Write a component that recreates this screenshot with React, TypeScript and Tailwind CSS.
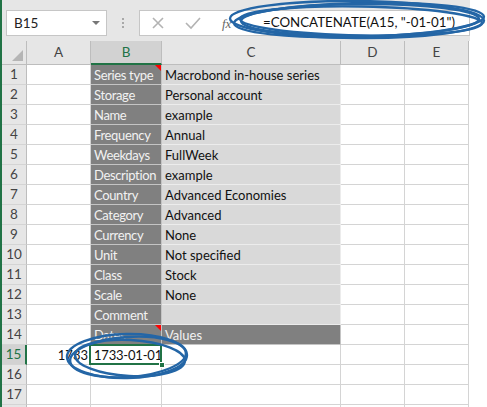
import React from "react";

const rows: { n: number; b?: string; c?: string; cDark?: boolean; note?: boolean }[] = [
  { n: 1, b: "Series type", c: "Macrobond in-house series", note: true },
  { n: 2, b: "Storage", c: "Personal account" },
  { n: 3, b: "Name", c: "example" },
  { n: 4, b: "Frequency", c: "Annual" },
  { n: 5, b: "Weekdays", c: "FullWeek" },
  { n: 6, b: "Description", c: "example" },
  { n: 7, b: "Country", c: "Advanced Economies" },
  { n: 8, b: "Category", c: "Advanced" },
  { n: 9, b: "Currency", c: "None" },
  { n: 10, b: "Unit", c: "Not specified" },
  { n: 11, b: "Class", c: "Stock" },
  { n: 12, b: "Scale", c: "None" },
  { n: 13, b: "Comment", c: "" },
  { n: 14, b: "Dates", c: "Values", cDark: true, note: true },
];

const cols = "grid grid-cols-[25px_64px_71px_179px_64px_64px]";

function Note() {
  return (
    <span className="absolute top-0 right-0 w-0 h-0 border-l-[6px] border-l-transparent border-t-[6px] border-t-[#ff0000]" />
  );
}

function RowHead({ n, active }: { n?: number; active?: boolean }) {
  return (
    <div
      className={`h-[20px] flex items-center justify-center border-b border-[#d4d4d4] text-[13.5px] ${
        active
          ? "bg-[#d2d2d2] text-[#217346] border-r-2 border-r-[#217346]"
          : "bg-[#e6e6e6] text-[#444] border-r border-r-[#bdbdbd]"
      }`}
    >
      {n}
    </div>
  );
}

function Blank() {
  return <div className="h-[20px] border-r border-b border-[#d4d4d4] bg-white" />;
}

export default function App() {
  return (
    <div className="relative w-[487px] h-[407px] bg-white overflow-hidden font-['Lato',sans-serif] text-[13px]">
      <div className="w-[470px] border-l-2 border-[#217346]">
        {/* formula bar */}
        <div className="h-[41px] bg-[#e6e6e6] flex items-start pt-[10px] pl-[4px]">
          <div className="w-[101px] h-[26px] bg-white border border-[#c6c6c6] flex items-center pl-[7px] pr-[6px] text-[#222] text-[13.5px]">
            <span className="flex-1">B15</span>
            <span className="w-0 h-0 border-l-[4px] border-r-[4px] border-t-[4px] border-l-transparent border-r-transparent border-t-[#777]" />
          </div>
          <div className="w-[32px] h-[26px] flex flex-col items-center justify-center gap-[2px]">
            <span className="w-[2px] h-[2px] bg-[#a8a8a8]" />
            <span className="w-[2px] h-[2px] bg-[#a8a8a8]" />
            <span className="w-[2px] h-[2px] bg-[#a8a8a8]" />
          </div>
          <div className="flex-1 h-[26px] bg-white border border-[#c6c6c6] flex items-center whitespace-nowrap overflow-hidden">
            <svg width="100" height="24" viewBox="0 0 100 24" className="shrink-0">
              <path d="M13 7 L23 17 M23 7 L13 17" stroke="#b3b3b3" strokeWidth="1.6" />
              <path d="M46 12 L51 17 L60 7" stroke="#b3b3b3" strokeWidth="1.6" fill="none" />
              <text x="82" y="17" fontStyle="italic" fontSize="13" fill="#666" fontFamily="Liberation Serif, serif">fx</text>
            </svg>
            <span className="ml-[23px] text-[#111] text-[13.3px]">=CONCATENATE(A15, "-01-01")</span>
          </div>
        </div>

        {/* column headers */}
        <div className={`${cols} h-[24px] text-[#444] text-[13.5px]`}>
          <div className="relative bg-[#e6e6e6] border-r border-b border-[#bdbdbd]">
            <span className="absolute right-[3px] bottom-[3px] w-0 h-0 border-l-[11px] border-l-transparent border-b-[11px] border-b-[#b5b5b5]" />
          </div>
          <div className="bg-[#e6e6e6] border-r border-b border-[#bdbdbd] flex items-center justify-center">A</div>
          <div className="bg-[#d2d2d2] border-r border-[#bdbdbd] border-b-2 border-b-[#217346] text-[#217346] flex items-center justify-center">B</div>
          <div className="bg-[#e6e6e6] border-r border-b border-[#bdbdbd] flex items-center justify-center">C</div>
          <div className="bg-[#e6e6e6] border-r border-b border-[#bdbdbd] flex items-center justify-center">D</div>
          <div className="bg-[#e6e6e6] border-r border-b border-[#bdbdbd] flex items-center justify-center">E</div>
        </div>

        {/* body */}
        <div className={cols}>
          {rows.map((r) => (
            <React.Fragment key={r.n}>
              <RowHead n={r.n} />
              <Blank />
              <div className="relative h-[20px] bg-[#808080] text-[#f2f2f2] border-r border-b border-[#c4c4c4] pl-[3px] leading-[20px] tracking-[-0.35px] whitespace-nowrap overflow-hidden">
                {r.b}
                {r.note && <Note />}
              </div>
              <div
                className={`h-[20px] pl-[3px] leading-[20px] border-r border-b whitespace-nowrap ${
                  r.cDark
                    ? "bg-[#808080] text-[#f2f2f2] border-[#c4c4c4]"
                    : "bg-[#d9d9d9] text-[#111] border-[#ececec]"
                }`}
              >
                {r.c}
              </div>
              <Blank />
              <Blank />
            </React.Fragment>
          ))}

          <RowHead n={15} active />
          <div className="h-[20px] border-r border-b border-[#d4d4d4] text-right pr-[2px] leading-[20px] text-[#111]">1733</div>
          <div className="relative h-[20px] border-r border-b border-[#d4d4d4] pl-[3px] leading-[20px] text-[#111] tracking-[-0.2px] whitespace-nowrap">
            1733-01-01
            <span className="absolute -left-[2px] -top-[1px] -right-[1px] -bottom-[1px] border-2 border-[#217346]" />
            <span className="absolute -right-[4px] -bottom-[4px] w-[6px] h-[6px] bg-[#217346] border border-white" />
          </div>
          <Blank />
          <Blank />
          <Blank />

          {[16, 17].map((n) => (
            <React.Fragment key={n}>
              <RowHead n={n} />
              <Blank />
              <Blank />
              <Blank />
              <Blank />
              <Blank />
            </React.Fragment>
          ))}
          <RowHead />
          <Blank />
          <Blank />
          <Blank />
          <Blank />
          <Blank />
        </div>
      </div>

      {/* hand-drawn highlight loops */}
      <svg className="absolute inset-0 pointer-events-none" width="487" height="407" viewBox="0 0 487 407" fill="none">
        <g stroke="#2466a6" strokeWidth="2.4">
          <ellipse cx="359" cy="20" rx="125" ry="17" transform="rotate(-1.5 359 20)" />
          <ellipse cx="361" cy="21" rx="121" ry="14.5" transform="rotate(1 361 21)" />
          <ellipse cx="357" cy="19.5" rx="127" ry="18.5" transform="rotate(0.5 357 19.5)" />
          <ellipse cx="360" cy="20" rx="119" ry="16" transform="rotate(-0.5 360 20)" />
        </g>
        <g stroke="#2466a6" strokeWidth="2.4">
          <ellipse cx="128" cy="357" rx="58" ry="20" transform="rotate(-4 128 357)" />
          <ellipse cx="130" cy="358" rx="55" ry="18" transform="rotate(3 130 358)" />
          <ellipse cx="127" cy="356" rx="60" ry="22" transform="rotate(-1 127 356)" />
        </g>
      </svg>
    </div>
  );
}
